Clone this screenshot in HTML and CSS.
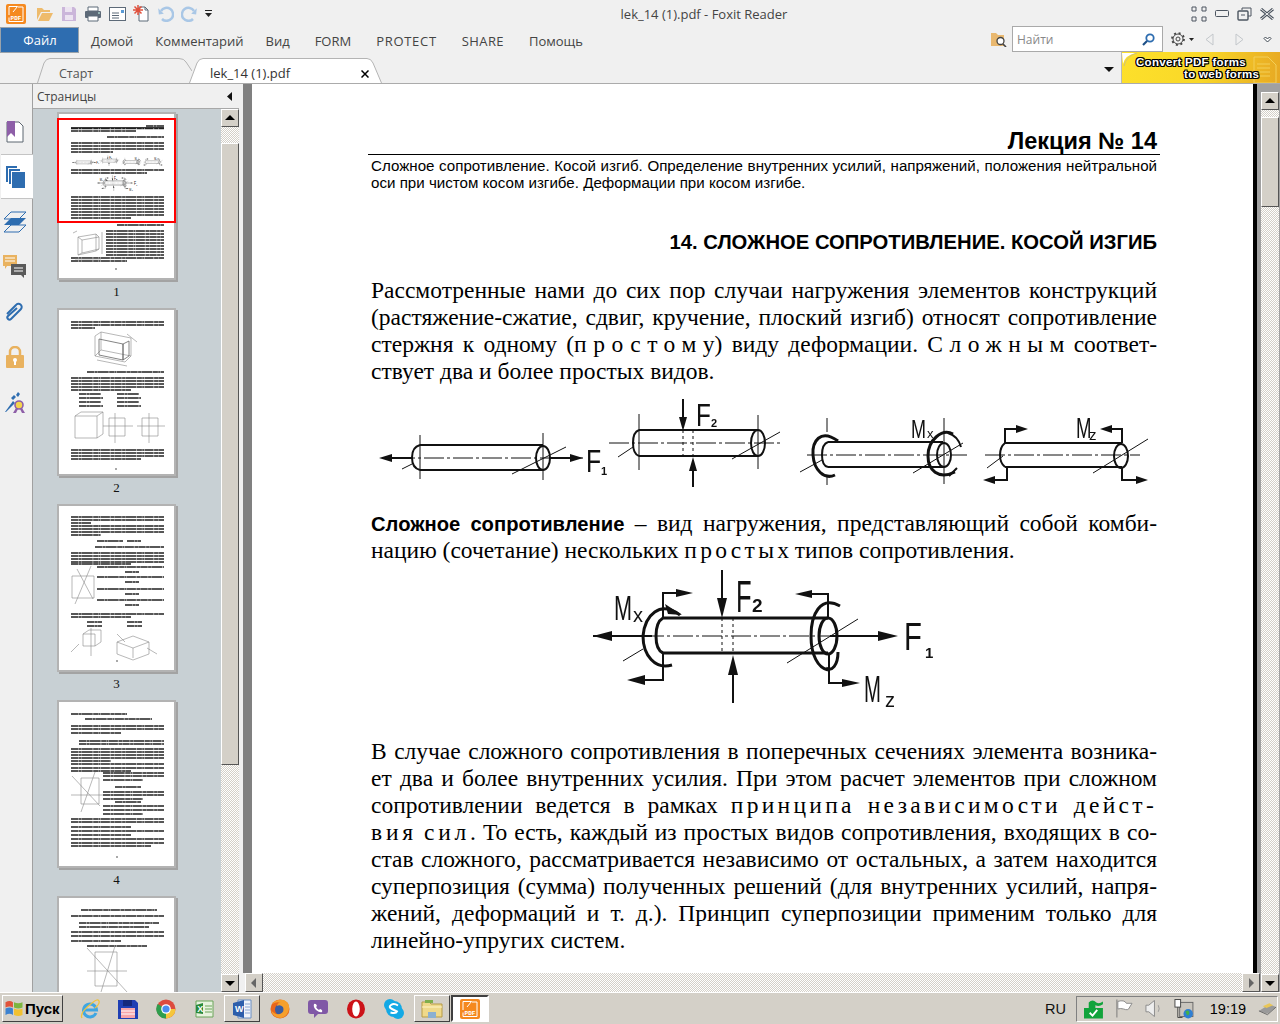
FILE: index.html
```html
<!DOCTYPE html>
<html lang="ru">
<head>
<meta charset="utf-8">
<title>lek_14 (1).pdf - Foxit Reader</title>
<link rel="stylesheet" href="styles.css">
</head>
<body>
<div class="app">
  <header class="titlebar">
    <div class="quick">
      <svg class="ico-logo" width="20" height="20" viewBox="0 0 20 20"><rect width="20" height="20" rx="2" fill="#f5891f"/><path d="M3 11V2.500h8.500L7 8M12 3h5v14.500H3v-4" fill="none" stroke="#fff"/><text x="10" y="16" text-anchor="middle" class="pdf-mini">PDF</text></svg>
      <svg class="qi" width="18" height="16" viewBox="0 0 18 16"><path d="M1 14V2h5l2 2h6v2H5L1 14zm1 1 4-8h11l-4 8z" fill="#eebb6c"/></svg>
      <svg class="qi" width="16" height="16" viewBox="0 0 16 16"><path d="M1 1h12l2 2v12H1z" fill="#cbb6da"/><path d="M4 1h7v5H4zM4 9h8v5H4z" fill="#ece4f1"/></svg>
      <svg class="qi" width="18" height="16" viewBox="0 0 18 16"><path d="M4 1h10v4H4z" fill="#fff" stroke="#5d6a78"/><rect x="1" y="5" width="16" height="7" rx="1" fill="#5d6a78"/><path d="M4 10h10v5H4z" fill="#fff" stroke="#5d6a78"/><path d="M14 7h2" stroke="#cfe"/></svg>
      <svg class="qi" width="17" height="14" viewBox="0 0 17 14"><rect x=".5" y=".5" width="16" height="13" fill="#fff" stroke="#5d6a78"/><path d="M3 6h7M3 8.500h7M3 11h7" stroke="#5d6a78"/><rect x="12" y="3" width="3" height="3" fill="#5a9bd6"/></svg>
      <svg class="qi" width="17" height="17" viewBox="0 0 17 17"><path d="M6 2h6l3 3v11H6z" fill="#fff" stroke="#5d6a78"/><path d="M12 2v3h3" fill="none" stroke="#5d6a78"/><path d="M5 0v10M0 5h10M1.500 1.500l7 7M8.500 1.500l-7 7" stroke="#e0503c" stroke-width="1.500"/></svg>
      <svg class="qi" width="17" height="16" viewBox="0 0 17 16"><path d="M4 5a6.500 6.500 0 1 1 1 8" fill="none" stroke="#a9c7e6" stroke-width="2.500"/><path d="M0 5h8l-3 4z" fill="#a9c7e6" transform="rotate(45 4 5)"/></svg>
      <svg class="qi" width="17" height="16" viewBox="0 0 17 16"><path d="M13 5a6.500 6.500 0 1 0-1 8" fill="none" stroke="#a9c7e6" stroke-width="2.500"/><path d="M17 5H9l3 4z" fill="#a9c7e6" transform="rotate(-45 13 5)"/></svg>
      <svg class="qi-more" width="7" height="7" viewBox="0 0 7 7"><path d="M0 0h7v1H0zM0 3h7L3.500 7z" fill="#222"/></svg>
    </div>
    <div class="wintitle">lek_14 (1).pdf - Foxit Reader</div>
    <div class="winctl">
      <svg width="16" height="16" viewBox="0 0 16 16"><path d="M1 5V1h4v4zM11 5V1h4v4zM1 15v-4h4v4zM11 15v-4h4v4z" fill="none" stroke="#4c5560"/></svg>
      <svg width="14" height="7" viewBox="0 0 14 7"><rect x=".5" y=".5" width="13" height="6" rx="1" fill="none" stroke="#4c5560"/></svg>
      <svg width="15" height="14" viewBox="0 0 15 14"><path d="M5 3V1h9v8h-3" fill="none" stroke="#4c5560"/><rect x="1" y="4" width="10" height="9" rx="1" fill="none" stroke="#4c5560" stroke-width="1.400"/><path d="M4 8h4" stroke="#4c5560"/></svg>
      <svg width="14" height="12" viewBox="0 0 14 12"><path d="M1 1l12 10M13 1L1 11" stroke="#4c5560" stroke-width="3"/><path d="M1 1l12 10M13 1L1 11" stroke="#f0f0f0"/></svg>
    </div>
  </header>

  <nav class="menubar">
    <div class="file-btn">Файл</div>
    <ul class="menu">
      <li>Домой</li><li>Комментарий</li><li>Вид</li><li class="lat">FORM</li><li class="lat wide1">PROTECT</li><li class="lat wide2">SHARE</li><li class="lat">Помощь</li>
    </ul>
    <div class="menu-right">
      <svg width="16" height="15" viewBox="0 0 16 15"><path d="M0 1h5l2 2h6v11H0z" fill="#e9b86f"/><circle cx="9.500" cy="9" r="3.500" fill="#fff" stroke="#444" stroke-width="1.300"/><path d="M12 12l3 3" stroke="#444" stroke-width="1.600"/></svg>
      <div class="search"><span>Найти</span>
        <svg width="13" height="13" viewBox="0 0 13 13"><circle cx="8" cy="5" r="3.700" fill="#fff" stroke="#2e6db0" stroke-width="1.800"/><path d="M5 8l-4 4" stroke="#1d4f86" stroke-width="2.200"/></svg>
      </div>
      <svg class="gear" width="14" height="14" viewBox="0 0 14 14"><circle cx="7" cy="7" r="2" fill="none" stroke="#444"/><circle cx="7" cy="7" r="5" fill="none" stroke="#444"/><circle cx="7" cy="7" r="6" fill="none" stroke="#444" stroke-width="1.800" stroke-dasharray="2 2.700"/></svg>
      <svg class="gear-caret" width="5" height="3" viewBox="0 0 5 3"><path d="M0 0h5L2.500 3z" fill="#222"/></svg>
      <svg class="nav-b" width="9" height="13" viewBox="0 0 9 13"><path d="M8 1v11L1 6.500z" fill="none" stroke="#c3c7cb"/></svg>
      <svg class="nav-f" width="9" height="13" viewBox="0 0 9 13"><path d="M1 1v11l7-5.500z" fill="none" stroke="#c3c7cb"/></svg>
      <svg class="nav-c" width="9" height="7" viewBox="0 0 9 7"><path d="M1 2.500 2.500 1 4.500 3 6.500 1 8 2.500 4.500 6z" fill="#fff" stroke="#3d4650"/></svg>
    </div>
  </nav>

  <div class="tabbar">
    <div class="tab tab-start">
      <svg class="tab-shape" width="155" height="25" viewBox="0 0 155 25"><path d="M.5 25 7 5Q9 .5 13 .5H142Q147 .5 149 4L155 13" fill="#f0f0f0" stroke="#b4b4b4"/></svg>
      <span>Старт</span>
    </div>
    <div class="tab tab-active">
      <svg class="tab-shape" width="193" height="25" viewBox="0 0 193 25"><path d="M.5 25 8 5Q10 .5 14 .5H178Q182 .5 184 5L192.500 25" fill="#fff" stroke="#b4b4b4"/></svg>
      <span>lek_14 (1).pdf</span>
      <svg class="tab-x" width="8" height="8" viewBox="0 0 8 8"><path d="M.5.5l7 7M7.500.5l-7 7" stroke="#000" stroke-width="1.500"/></svg>
    </div>
    <svg class="tab-more" width="10" height="5" viewBox="0 0 10 5"><path d="M0 0h10L5 5z" fill="#111"/></svg>
    <div class="banner">
      <svg class="banner-art" width="159" height="31" viewBox="0 0 159 31"><path d="M1 12Q3 3 14 1H0z" fill="#fff"/><path d="M2 14Q4 4 15 1" fill="none" stroke="#cfc27a"/><path d="M132 5h14l8 8v18h-22zM135 12h13M135 16h13M135 20h13M135 24h13" fill="none" stroke="#f3cf58"/></svg>
      <span class="b1">Convert PDF forms</span>
      <span class="b2">to web forms</span>
    </div>
  </div>

  <main class="main">
    <aside class="rail">
      <div class="rail-item">
        <svg width="18" height="22" viewBox="0 0 18 22"><path d="M1 1h12l4 4v16H1z" fill="#fff" stroke="#5d6670"/><path d="M1 0h8v16l-4-4-4 4z" fill="#8e5fa8"/></svg>
      </div>
      <div class="rail-item on">
        <svg width="19" height="22" viewBox="0 0 19 22"><path d="M0 16V0h11v2H2v14z" fill="#2e6db0"/><path d="M3 18V3h11v2H5v13z" fill="#2e6db0"/><rect x="6" y="6" width="13" height="16" fill="#2e6db0"/></svg>
      </div>
      <div class="rail-item">
        <svg width="24" height="22" viewBox="0 0 24 22"><path d="M1 8 8 1h15l-7 7z" fill="none" stroke="#2e6db0"/><path d="M1 14 8 7h15l-7 7z" fill="#2e6db0"/><path d="M1 21l7-7h15l-7 7z" fill="none" stroke="#2e6db0"/></svg>
      </div>
      <div class="rail-item">
        <svg width="23" height="23" viewBox="0 0 23 23"><path d="M0 0h14v11H4l-2 3v-3H0z" fill="#e9b25f"/><path d="M2 3h10M2 6h10" stroke="#fff"/><path d="M8 9h15v11h-2v3l-3-3H8z" fill="#5a5a5a"/><path d="M11 13h9M11 16h9" stroke="#fff"/></svg>
      </div>
      <div class="rail-item">
        <svg width="20" height="22" viewBox="0 0 20 22"><path d="M4 12 13 3a3 3 0 0 1 5 4L8 17a2 2 0 0 1-3-3l9-8" fill="none" stroke="#2e6db0" stroke-width="2" transform="translate(-2 1)"/></svg>
      </div>
      <div class="rail-item">
        <svg width="18" height="22" viewBox="0 0 18 22"><path d="M4 10V6a5 5 0 0 1 10 0v4" fill="none" stroke="#e9b25f" stroke-width="2.500"/><rect y="9" width="18" height="13" rx="1" fill="#e9b25f"/><circle cx="9" cy="14" r="2" fill="#fff"/><rect x="8" y="14" width="2" height="5" fill="#fff"/></svg>
      </div>
      <div class="rail-item">
        <svg width="21" height="24" viewBox="0 0 21 24"><path d="M1 22 9 11l2 2-9 9z" fill="#2e6db0"/><path d="M7 8l3-3 2 2-3 3zM12 5l2-3 2 2-2 3z" fill="#2e6db0"/><circle cx="15" cy="15" r="4" fill="#f4d44d" stroke="#8e5fa8" stroke-width="1.600"/><path d="M12 18l-3 5h3l2-4zM18 18l3 5h-3l-2-4z" fill="#8e5fa8"/></svg>
      </div>
    </aside>

    <section class="side">
      <div class="side-head"><span>Страницы</span>
        <svg width="5" height="9" viewBox="0 0 5 9"><path d="M5 0v9L0 4.500z" fill="#111"/></svg>
      </div>
      <div class="side-body">
        <div class="thumbs">
          <figure class="thumb-item">
            <div class="thumb">
              <svg viewBox="2 2 115 164" width="115" height="164">
                <path class="tx" d="M89 14h18M14 16.500h93M14 19h65M50 25h57M14 31h93M14 34h93M14 37h93M14 40h42M14 58h93M14 61h76M14 85h93M14 88h93M14 91h93M14 94h93M14 97h93M14 100h93M14 103h93M14 106h60M60 113h47M49 119h58M49 122h58M49 125h58M49 128h58M49 131h58M49 134h58M49 137h58M49 140h58M49 143h58M14 146h93M14 149h56"/>
                <path class="thin" d="M14 15.500h93"/>
                <use href="#art1" transform="translate(14 43) scale(.118) translate(-371 -395)"/>
                <use href="#art2" transform="translate(14 63) scale(.118) translate(-371 -568)"/>
                <path class="gr" d="M21 125l18-3v17l-18 4zM25 128l17-3v12l-17 4zM21 125l4 3M39 122l3 3M39 139l3-2M21 143l4-2M16 121l4-2M45 120v22M18 147h26"/>
                <circle cx="59" cy="157" r=".7" fill="#111"/>
              </svg>
              <span class="viewbox"></span>
            </div>
            <figcaption>1</figcaption>
          </figure>
          <figure class="thumb-item">
            <div class="thumb">
              <svg viewBox="2 2 115 164" width="115" height="164">
                <path class="tx" d="M14 14h93M14 17h93M14 20h24M30 64h77M14 70h93M14 73h93M14 76h93M14 79h93M14 82h60M22 86h22M60 86h22M22 90h24M60 90h24M22 94h22M60 94h22M22 98h24M60 98h24M14 142h93M14 145h93M14 148h93M14 151h70"/>
                <path class="gr" d="M44 24l30 6v18l-30-6zM44 24l-6 4v20l6-6M38 48l30 6 6-6M70 26l10 8M40 52l30 6"/>
                <path class="dk" d="M42 31l24 5v16l-24-5zM66 36l6-3v15l-6 4z"/>
                <path class="gr" d="M18 108h22v22H18zM24 104h22v22M18 108l6-4M40 108l6-4M40 130l6-4M52 110h16v18H52zM58 105v30M46 118h30M85 110h16v18H85zM92 105v30M80 118h28"/>
                <circle cx="59" cy="161" r=".7" fill="#111"/>
              </svg>
            </div>
            <figcaption>2</figcaption>
          </figure>
          <figure class="thumb-item">
            <div class="thumb">
              <svg viewBox="2 2 115 164" width="115" height="164">
                <path class="tx" d="M14 13h93M14 16h93M14 19h20M14 22h93M14 25h93M14 28h93M14 31h30M40 37h26M70 37h14M38 43h69M14 49h93M14 52h93M14 55h93M14 58h93M14 60h60M40 63h67M68 68h14M40 73h67M68 78h14M40 85h67M68 90h14M40 96h67M68 101h14M14 110h93M14 113h60M30 118h15M70 118h15M30 122h15M70 122h15"/>
                <path class="gr" d="M15 72h22v22H15zM18 100 34 62M20 65l16 30M26 130h12v12H26zM26 130l6-4h12v12l-6 4M34 124v28M22 140l-8 8M60 138l16-6 16 6-16 6zM76 144v10M92 138v12M60 138v12l16 6 16-6M60 130l8 8M100 150l-10-6"/>
                <circle cx="60" cy="157" r=".7" fill="#111"/>
              </svg>
            </div>
            <figcaption>3</figcaption>
          </figure>
          <figure class="thumb-item">
            <div class="thumb">
              <svg viewBox="2 2 115 164" width="115" height="164">
                <path class="tx" d="M14 14h56M28 19h67M14 26h93M14 29h93M14 33h50M22 41h85M22 44h85M14 49h93M14 52h93M14 55h93M14 58h93M14 61h40M14 64h93M14 68h93M14 71h60M46 73h61M46 76h61M46 80h40M58 87h26M46 92h61M46 95h61M46 99h40M58 102h26M46 106h61M46 110h61M46 114h40M14 119h93M14 122h93M14 127h60M14 131h93M14 135h60M14 139h93M14 143h93M14 146h80"/>
                <path class="gr" d="M24 78h18v26H24zM15 76l28 30M38 72l-14 40M14 95h32"/>
                <circle cx="60" cy="157" r=".7" fill="#111"/>
              </svg>
            </div>
            <figcaption>4</figcaption>
          </figure>
          <figure class="thumb-item">
            <div class="thumb">
              <svg viewBox="2 2 115 164" width="115" height="164">
                <path class="tx" d="M24 14h76M14 20h93M22 27h80M22 31h70M14 36h93M14 40h93M14 45h50M30 50h60"/>
                <path class="gr" d="M38 56h22v34H38zM30 52l40 44M58 50 44 96M30 75h40"/>
              </svg>
            </div>
          </figure>
        </div>
        <div class="sb">
          <div class="sb-btn up"></div>
          <div class="sb-track s16"></div>
          <div class="sb-thumb side-thumb"></div>
          <div class="sb-track fill"></div>
          <div class="sb-btn down"></div>
        </div>
      </div>
    </section>

    <section class="viewer">
      <div class="viewer-col">
        <div class="viewer-upper">
          <div class="splitter"></div>
          <article class="doc">
            <h1 class="lecture">Лекция № 14</h1>
            <p class="sub">Сложное сопротивление. Косой изгиб. Определение внутренних усилий, напряжений, положения нейтральной оси при чистом косом изгибе. Деформации при косом изгибе.</p>
            <h2 class="chapter">14. СЛОЖНОЕ СОПРОТИВЛЕНИЕ. КОСОЙ ИЗГИБ</h2>
            <div class="para p1">
              <span class="ln">Рассмотренные нами до сих пор случаи нагружения элементов конструкций</span>
              <span class="ln">(растяжение-сжатие, сдвиг, кручение, плоский изгиб) относят сопротивление</span>
              <span class="ln">стержня к одному (<span class="sp7">простом</span>у) виду деформации. <span class="sp7">Сложны</span>м соответ-</span>
              <span class="ln end">ствует два и более простых видов.</span>
            </div>
            <svg class="fig fig1" width="786" height="95" viewBox="371 395 786 95">
              <g id="art1">
                <g class="ink">
                  <path d="M420 445H543M420 470H543M420 445Q412 447 412 457.500T420 470"/>
                  <ellipse cx="543" cy="458" rx="7" ry="12"/>
                  <path class="ax" d="M395 458H583"/>
                  <path class="w1" d="M420 435V479M543 433V480M402 469 412 464M512 474 566 447"/>
                  <path class="w2" d="M390 458H412M550 458H575"/>
                  <path class="fl" d="M379 458 392 454V462zM583 458 570 454V462z"/>
                </g>
                <text class="lbl" transform="translate(586 472) scale(.8 1)" font-size="31">F</text>
                <text class="lbl subs" x="601" y="475" font-size="11">1</text>
                <g class="ink">
                  <path d="M639 430H758M639 456H758M639 430Q633 432 633 443T639 456"/>
                  <ellipse cx="758" cy="443" rx="7" ry="13"/>
                  <path class="ax" d="M609 443H783"/>
                  <path class="w1" d="M639 414V470M758 415V469M618 457 633 447M732 459 780 432"/>
                  <path class="dash" d="M683 430V456M693 430V456"/>
                  <path class="w2" d="M683 399V425M693 465V487"/>
                  <path class="fl" d="M683 431 679 417H687zM693 457 689 471H697z"/>
                </g>
                <text class="lbl" transform="translate(696 426) scale(.76 1)" font-size="32">F</text>
                <text class="lbl subs" x="711" y="427" font-size="11">2</text>
                <g class="ink">
                  <path d="M828 442H943M828 467H943M828 442Q822 444 822 455T828 467"/>
                  <ellipse cx="944" cy="455" rx="7" ry="12"/>
                  <path class="ax" d="M807 455H967"/>
                  <path class="w1" d="M827 418V432M827 475V485M944 418V484M800 472 822 460M913 473 963 443"/>
                  <path class="w3" d="M838 441C820 428 812 442 813 455 814 470 824 480 835 475M953 434C942 428 928 440 928 456 928 470 938 480 955 472"/>
                  <path class="w2" d="M948 433Q958 436 961 447M949 476 957 468"/>
                </g>
                <text class="lbl" transform="translate(911 438) scale(.72 1)" font-size="25">M</text>
                <text class="lbl" x="927" y="438" font-size="13">x</text>
                <g class="ink">
                  <path d="M1005 443H1122M1005 467H1122M1005 443Q1000 447 1000 455T1005 467"/>
                  <ellipse cx="1121" cy="456" rx="7" ry="12"/>
                  <path class="ax" d="M985 455H1140"/>
                  <path class="w1" d="M987 468 1003 456M1093 473 1148 439"/>
                  <path class="w2" d="M1005 443V429H1022M1122 443V429H1106M1007 467V480H990M1122 467V480H1142"/>
                  <path class="fl" d="M1028 429 1016 425V433zM1100 429 1112 425V433zM983 480 995 476V484zM1148 480 1136 476V484z"/>
                </g>
                <text class="lbl" transform="translate(1076 438) scale(.62 1)" font-size="30">M</text>
                <text class="lbl" x="1089" y="440" font-size="15">z</text>
              </g>
            </svg>
            <div class="para p2">
              <span class="ln"><b class="bd">Сложное сопротивление</b> – вид нагружения, представляющий собой комби-</span>
              <span class="ln end">нацию (сочетание) нескольких <span class="sp3">просты</span>х типов сопротивления.</span>
            </div>
            <svg class="fig fig2" width="786" height="148" viewBox="371 568 786 148">
              <g id="art2">
                <g class="ink">
                  <path class="w3" d="M663 618H828M663 653H828M663 618Q656 622 656 636T663 653"/>
                  <ellipse class="w3" cx="828" cy="636" rx="9" ry="18"/>
                  <path class="ax" d="M615 636H875"/>
                  <path class="w2" d="M593 636H652M830 636H880"/>
                  <path class="fl" d="M593 636 612 631V641zM898 636 878 631V641zM722 618 717 598H727zM733 655 728 675H738zM693 593 676 589V597zM795 594 812 590V598zM627 680 645 675V685zM860 683 842 679V687z"/>
                  <path class="w2" d="M722 570V600M733 672V703M663 618V593H680M828 618V594H810M663 653V680H640M829 654V683H848"/>
                  <path class="dash" d="M722 618V653M733 618V653"/>
                  <path class="w1" d="M623 661 643 649M787 663 858 619"/>
                  <path class="w3" d="M680 615C660 600 645 615 643 636 643 655 655 670 672 665M840 606C820 595 811 615 811 636 811 655 818 668 828 670M838 652C838 665 832 672 826 668"/>
                  <path class="fl" d="M665 604 682 615 668 614z"/>
                </g>
                <text class="lbl" transform="translate(614 620) scale(.62 1)" font-size="35">M</text>
                <text class="lbl" x="633" y="622" font-size="20">x</text>
                <text class="lbl" transform="translate(736 612) scale(.58 1)" font-size="44">F</text>
                <text class="lbl subs" x="752" y="612" font-size="19">2</text>
                <text class="lbl" transform="translate(904 650) scale(.75 1)" font-size="39">F</text>
                <text class="lbl subs" x="925" y="658" font-size="15">1</text>
                <text class="lbl" transform="translate(864 702) scale(.55 1)" font-size="37">M</text>
                <text class="lbl" x="885" y="707" font-size="20">z</text>
              </g>
            </svg>
            <div class="para p3">
              <span class="ln">В случае сложного сопротивления в поперечных сечениях элемента возника-</span>
              <span class="ln">ет два и более внутренних усилия. При этом расчет элементов при сложном</span>
              <span class="ln">сопротивлении ведется в рамках <span class="sp3">принципа</span> <span class="sp3">независимости</span> <span class="sp3">дейст-</span></span>
              <span class="ln"><span class="sp4">вия</span> <span class="sp4">сил</span>. То есть, каждый из простых видов сопротивления, входящих в со-</span>
              <span class="ln">став сложного, рассматривается независимо от остальных, а затем находится</span>
              <span class="ln">суперпозиция (сумма) полученных решений (для внутренних усилий, напря-</span>
              <span class="ln">жений, деформаций и т. д.). Принцип суперпозиции применим только для</span>
              <span class="ln end">линейно-упругих систем.</span>
            </div>
          </article>
          <div class="edge"></div>
        </div>
        <div class="hbar">
          <div class="sb-btn left"></div>
          <div class="sb-track fill"></div>
          <div class="sb-btn right"></div>
        </div>
      </div>
      <div class="vbar">
        <div class="sb-btn up"></div>
        <div class="sb-track s7"></div>
        <div class="sb-thumb doc-thumb"></div>
        <div class="sb-track fill"></div>
        <div class="sb-btn down"></div>
      </div>
    </section>
  </main>

  <footer class="taskbar">
    <div class="start">
      <svg width="20" height="17" viewBox="0 0 18 16"><path d="M1 2q4-2 7 0v5q-3-2-7 0z" fill="#e0533a"/><path d="M9 2q4 2 8 0v5q-4 2-8 0z" fill="#7cb53f"/><path d="M1 8q4-2 7 0v6q-3-2-7 0z" fill="#3c82d0"/><path d="M9 8q4 2 8 0v6q-4 2-8 0z" fill="#f1c131"/></svg>
      <span>Пуск</span>
    </div>
    <div class="task-icons">
      <div class="task"><svg width="20" height="20" viewBox="0 0 20 20"><path d="M16 14a6.500 6.500 0 1 1 .5-3H4" fill="none" stroke="#3ea6e3" stroke-width="3"/><path d="M2 19Q-1 14 12 4 18 -1 19 2T15 9" fill="none" stroke="#f0c33c" stroke-width="1.300"/></svg></div>
      <div class="task"><svg width="20" height="20" viewBox="0 0 20 20"><path d="M0 1h17l3 3v16H0z" fill="#1f3fb4"/><rect x="5" y="1" width="9" height="6" fill="#14287c"/><rect x="3" y="9" width="14" height="10" fill="#f8a5a9"/><path d="M3 12h14M3 15h14" stroke="#fff"/></svg></div>
      <div class="task"><svg width="20" height="20" viewBox="0 0 20 20"><circle cx="10" cy="10" r="9.500" fill="#dd4b3e"/><path d="M10 10 1.700 5A9.500 9.500 0 0 0 10 19.500z" fill="#2e9e4e"/><path d="M10 10h9.500A9.500 9.500 0 0 1 10 19.500z" fill="#f5c63b"/><circle cx="10" cy="10" r="4.800" fill="#fff"/><circle cx="10" cy="10" r="3.600" fill="#4b8df0"/></svg></div>
      <div class="task"><svg width="19" height="18" viewBox="0 0 19 18"><path d="M1 1h17v16H1z" fill="#e7f2de" stroke="#6aa55a"/><path d="M1 5 8 3v11l-7-1z" fill="#2a8a3a"/><path d="M10 6h7M10 9h7M10 12h7" stroke="#6aa55a"/><text x="2.200" y="11.500" class="xl">X</text></svg></div>
      <div class="task press"><svg width="19" height="20" viewBox="0 0 19 20"><path d="M5 1h13v18H5z" fill="#f0f4fa" stroke="#6b8fc4"/><path d="M0 4l11-3v18L0 16z" fill="#2d5eab"/><path d="M12 5h5M12 8h5M12 11h5M12 14h5" stroke="#8aa6d3"/><text x="2" y="13" class="xl">W</text></svg></div>
      <div class="task"><svg width="20" height="20" viewBox="0 0 20 20"><circle cx="10" cy="10" r="9.500" fill="#e8661c"/><circle cx="10.500" cy="10.500" r="5.500" fill="#3a5ca0"/><path d="M2 5Q6 0 14 1q6 3 5 9-1 7-8 9Q3 19 1 11q3 5 9 4 5-2 3-7-3-3-6-1 1-4 4-3-4-2-9 1z" fill="#f6a02c"/></svg></div>
      <div class="task"><svg width="20" height="20" viewBox="0 0 20 20"><path d="M3 1h14q3 0 3 3v8q0 3-3 3H10l-4 4v-4H3q-3 0-3-3V4q0-3 3-3z" fill="#8058a6"/><path d="M6 5q2-1 3 2L8 8q1 2 3 3l1-1q3 1 2 3-2 1-6-2-3-3-2-6z" fill="#fff"/></svg></div>
      <div class="task"><svg width="18" height="20" viewBox="0 0 18 20"><ellipse cx="9" cy="10" rx="9" ry="9.500" fill="#cc1218"/><ellipse cx="9" cy="10" rx="3.800" ry="7.500" fill="#fff"/></svg></div>
      <div class="task"><svg width="20" height="20" viewBox="0 0 20 20"><circle cx="6" cy="6" r="6" fill="#13a9e5"/><circle cx="14" cy="14" r="6" fill="#13a9e5"/><circle cx="10" cy="10" r="8" fill="#13a9e5"/><path d="M14 6.500Q10 4 7 6t1 4 5 2.500q-1 2.500-6.500 1" fill="none" stroke="#fff" stroke-width="2"/></svg></div>
      <div class="task press"><svg width="22" height="20" viewBox="0 0 22 20"><path d="M1 3h7l2 2h11v13H1z" fill="#efd98a" stroke="#b69b47"/><path d="M1 8h20" stroke="#fff5c8"/><rect x="4" y="1" width="8" height="3" fill="#7fae4c"/><rect x="7" y="13" width="8" height="6" fill="#8bb0d1"/></svg></div>
      <div class="task active"><svg width="20" height="20" viewBox="0 0 20 20"><rect width="20" height="20" rx="2" fill="#f5891f"/><path d="M3 11V2.500h8.500L7 8M12 3h5v14.500H3v-4" fill="none" stroke="#fff"/><text x="10" y="16" text-anchor="middle" class="pdf-mini">PDF</text></svg></div>
    </div>
    <div class="lang">RU</div>
    <div class="tray">
      <svg width="20" height="20" viewBox="0 0 20 20"><path d="M0 9h5V3q4-4 8 0 3 2 7-1v3q-4 3-8 1V9h8v11H0z" fill="#11a33b"/><path d="M6 14l3 3 5-6" fill="none" stroke="#fff" stroke-width="2"/></svg>
      <svg width="19" height="19" viewBox="0 0 19 19"><path d="M2 0v19" stroke="#777"/><path d="M3 2q7-2 9 2l6 0-3 5q-1 3-6 1-3-1-6 0z" fill="#fff" stroke="#888"/></svg>
      <svg width="18" height="17" viewBox="0 0 18 17"><path d="M1 5h3l6-5v17l-6-5H1z" fill="#eee" stroke="#888"/><path d="M14 5q2 4 0 7" fill="none" stroke="#999"/></svg>
      <svg width="21" height="20" viewBox="0 0 21 20"><rect x="6" y="3" width="14" height="15" fill="#c9c5bd" stroke="#666"/><rect x="1" y="0" width="6" height="8" fill="#fff" stroke="#444"/><path d="M4 8v11h5" fill="none" stroke="#444"/><circle cx="15" cy="15" r="5" fill="#2f7fd3"/><path d="M12 13q3-3 4 0t-2 4" fill="#43b04a"/></svg>
      <span class="clock">19:19</span>
      <svg class="desk" width="20" height="14" viewBox="0 0 20 14"><path d="M1 9 12 2l7 3-9 7z" fill="#9a9a9a"/><path d="M5 4l7-3 4 2-7 3z" fill="#e9c657"/><path d="M1 9l9 4 9-8" fill="none" stroke="#666"/></svg>
    </div>
  </footer>
</div>
</body>
</html>
```
FILE: styles.css
```css
* { box-sizing: border-box; }
html, body { margin: 0; padding: 0; }
body { width: 1280px; height: 1024px; overflow: hidden; background: #f0f0f0; font-family: "Open Sans", "Noto Sans", sans-serif; color: #444; }
.app { width: 1280px; height: 1024px; display: flex; flex-direction: column; overflow: hidden; }
.pdf-mini { font: bold 6px "Liberation Mono", monospace; fill: #fff; }
.xl { font: bold 9px "Liberation Sans", sans-serif; fill: #fff; }

.titlebar { height: 27px; display: flex; align-items: center; flex: none; }
.quick { width: 212px; flex: none; display: flex; align-items: center; padding-left: 6px; }
.quick .qi { margin-left: 7px; flex: none; }
.ico-logo { margin-right: 3px; flex: none; }
.qi-more { margin-left: 7px; }
.wintitle { flex: 1; text-align: center; font-size: 13px; color: #444; padding-left: 5px; }
.winctl { width: 89px; flex: none; display: flex; align-items: center; gap: 8px; }

.menubar { height: 25px; flex: none; display: flex; align-items: center; }
.file-btn { width: 79px; height: 26px; background: #2e6db0; border: 1px solid #9aa3ab; color: #fff; font-size: 13px; text-align: center; line-height: 24px; padding-left: 1px; }
.menu { list-style: none; display: flex; gap: 22px; margin: 0; padding: 2px 0 0 12px; font-size: 13px; color: #444; }
.menu .lat { margin-left: 3px; }
.menu .wide1 { letter-spacing: .7px; }
.menu .wide2 { letter-spacing: .4px; }
.menu-right { margin-left: auto; display: flex; align-items: center; height: 26px; align-self: flex-start; margin-top: -1px; }
.search { width: 151px; height: 26px; margin-left: 5px; background: #fff; border: 1px solid #a9a9a9; display: flex; align-items: center; justify-content: space-between; padding: 0 7px 0 4px; font-size: 12px; color: #888; }
.gear { margin-left: 8px; }
.gear-caret { margin-left: 4px; }
.nav-b { margin-left: 11px; }
.nav-f { margin-left: 21px; }
.nav-c { margin-left: 19px; margin-right: 8px; }

.tabbar { height: 32px; flex: none; display: flex; align-items: flex-end; border-bottom: 1px solid #ababab; padding-left: 37px; }
.tab { position: relative; height: 25px; font-size: 13px; line-height: 31px; }
.tab-shape { position: absolute; left: 0; top: 0; }
.tab span { position: relative; }
.tab-start { width: 152px; padding-left: 22px; color: #555; font-size: 12.500px; }
.tab-active { width: 193px; padding-left: 21px; color: #333; }
.tab-x { position: absolute; right: 13px; top: 12px; }
.tab-more { margin-left: 722px; margin-bottom: 11px; }
.banner { margin-left: auto; width: 159px; height: 31px; position: relative; background: linear-gradient(100deg, #fde02b 0%, #f9d828 50%, #e7a823 100%); border-left: 1px solid #b9b9b9; font: bold 11.500px/12px "Liberation Sans", sans-serif; letter-spacing: .3px; color: #fff; text-shadow: 1px 0 0 #000, -1px 0 0 #000, 0 1px 0 #000, 0 -1px 0 #000, 1px 1px 0 #000, -1px -1px 0 #000, 1px -1px 0 #000, -1px 1px 0 #000; }
.banner-art { position: absolute; left: 0; top: 0; }
.banner span { position: absolute; white-space: nowrap; }
.b1 { left: 14px; top: 4px; }
.b2 { left: 62px; top: 16px; }

.main { height: 908px; flex: none; display: flex; }
.rail { width: 33px; flex: none; border-right: 1px solid #a0a0a0; padding-top: 25px; background: #f0f0f0; }
.rail-item { height: 45px; display: flex; align-items: center; justify-content: center; padding-right: 3px; }
.rail-item.on { background: #fff; margin: 0 -1px 0 1px; border-top: 1px solid #c4c4c4; border-bottom: 1px solid #c4c4c4; position: relative; padding-right: 4px; }
.side { width: 206px; flex: none; display: flex; flex-direction: column; }
.side-head { height: 25px; flex: none; border-bottom: 1px solid #a8a8a8; display: flex; align-items: center; justify-content: space-between; padding: 0 7px 0 4px; font-size: 12px; color: #444; }
.side-body { flex: 1; min-height: 0; display: flex; }
.thumbs { flex: 1; background: #c8d0d4; padding: 3px 0 0 24px; overflow: hidden; }
.thumb-item { margin: 0; height: 196px; width: 119px; }
.thumb { position: relative; width: 119px; height: 168px; background: #fff; border: 2px solid #b3b3b3; box-shadow: 2px 2px 0 #a3a3a3; }
.thumb svg { display: block; }
.viewbox { position: absolute; left: -2px; top: 4px; width: 119px; height: 105px; border: 2px solid #f00; }
.thumb-item figcaption { text-align: center; font: 13px/22px "Liberation Serif", serif; color: #111; margin-top: 1px; }
.tx { fill: none; stroke: #000; stroke-width: 1.700; stroke-dasharray: 7 .4 3 .3 11 .5 5 .3 2 .4 9 .5 4 .3; stroke-opacity: .88; filter: blur(.25px); }
.thin { fill: none; stroke: #111; stroke-width: .8; }
.gr { fill: none; stroke: #888; stroke-width: .6; }
.dk { fill: none; stroke: #666; stroke-width: .8; }

.sb { width: 18px; flex: none; display: flex; flex-direction: column; }
.sb-btn { width: 18px; height: 18px; flex: none; background: #d4d0c8; border: 1px solid; border-color: #fff #555 #555 #fff; position: relative; }
.sb-btn::after { content: ""; position: absolute; left: 50%; top: 50%; border: 5px solid transparent; }
.sb-btn.up::after { border-top: 0; border-bottom: 5px solid #000; transform: translate(-5px, -3px); }
.sb-btn.down::after { border-bottom: 0; border-top: 5px solid #000; transform: translate(-5px, -2px); }
.sb-btn.left::after { border-left: 0; border-right: 5px solid #666; transform: translate(-3px, -5px); }
.sb-btn.right::after { border-right: 0; border-left: 5px solid #666; transform: translate(-2px, -5px); }
.sb-track { background: repeating-conic-gradient(#d4d0c8 0 25%, #fff 0 50%) 0 0 / 2px 2px; }
.sb-track.fill { flex: 1; }
.s16 { height: 16px; flex: none; }
.s7 { height: 7px; flex: none; }
.sb-thumb { flex: none; background: #d4d0c8; border: 1px solid; border-color: #fff #555 #555 #fff; width: 18px; }
.side-thumb { height: 622px; }
.doc-thumb { height: 90px; }

.viewer { flex: 1; min-width: 0; display: flex; }
.viewer-col { width: 1021px; flex: none; display: flex; flex-direction: column; }
.viewer-upper { height: 889px; flex: none; display: flex; }
.splitter { width: 13px; flex: none; border-left: 4px solid #f0f0f0; background: #808080; }
.edge { width: 7px; flex: none; border-left: 4px solid #000; background: #a0a0a0; }
.doc { flex: 1; min-width: 0; background: #fff; padding: 44px 96px 0 119px; overflow: hidden; color: #000; }
.lecture { margin: 0 -3px; padding: 0 3px; border-bottom: 1px solid #000; height: 27px; text-align: right; font: bold 23.500px/26px "Liberation Sans", sans-serif; }
.sub { margin: 2px 0 0; font: 15.130px/17px "Liberation Sans", sans-serif; text-align: justify; }
.chapter { margin: 39px 0 0; text-align: right; font: bold 20.250px/24px "Liberation Sans", sans-serif; }
.para { font: 23.500px/27px "Liberation Serif", serif; }
.ln { display: block; text-align: justify; text-align-last: justify; white-space: nowrap; }
.ln.end { text-align-last: left; }
.sp7 { letter-spacing: 6.500px; }
.sp3 { letter-spacing: 3.300px; }
.sp4 { letter-spacing: 3.800px; }
.bd { font: bold 20.200px "Liberation Sans", sans-serif; }
.p1 { margin-top: 23px; }
.fig { display: block; filter: blur(.4px); }
.fig1 { margin-top: 10px; }
.p2 { margin-top: 20px; }
.fig2 { margin-top: 4px; }
.p3 { margin-top: 22px; }
.ink path, .ink ellipse { fill: none; stroke: #111; stroke-width: 2; }
.ink .ax { stroke-width: 1; stroke-dasharray: 20 3 3 3; }
.ink .w1 { stroke-width: 1; }
.ink .w2 { stroke-width: 2; }
.ink .w3 { stroke-width: 3; }
.ink .dash { stroke-width: 1; stroke-dasharray: 3 3; }
.ink .fl { fill: #111; stroke: none; }
.lbl { font-family: "Liberation Sans", sans-serif; fill: #111; }
.subs { font-weight: bold; }

.hbar { height: 19px; flex: none; display: flex; padding-left: 6px; }
.hbar .sb-btn { height: 19px; }
.vbar { width: 20px; flex: none; display: flex; flex-direction: column; padding: 8px 1px 0; background: #a0a0a0; }

.taskbar { height: 32px; flex: none; background: #d4d0c8; border-top: 1px solid #fff; display: flex; align-items: center; color: #000; }
.start { width: 61px; height: 27px; margin-left: 2px; background: #d4d0c8; border: 1px solid; border-color: #fff #404040 #404040 #fff; display: flex; align-items: center; gap: 1px; padding-left: 1px; font: bold 15px "Liberation Sans", sans-serif; color: #000; flex: none; }
.task-icons { display: flex; margin-left: 8px; }
.task { width: 38px; height: 27px; display: flex; align-items: center; justify-content: center; flex: none; }
.task.press { border: 1px solid; border-color: #fff #404040 #404040 #fff; margin: 0 1px; width: 36px; }
.task.active { border: 2px solid; border-color: #404040 #fff #fff #404040; background: #fff; }
.lang { margin-left: auto; font: 14.500px "Liberation Sans", sans-serif; color: #111; margin-right: 10px; }
.tray { width: 202px; height: 26px; margin-right: 2px; border: 1px solid; border-color: #808080 #fff #fff #808080; display: flex; align-items: center; gap: 12px; padding-left: 7px; flex: none; }
.clock { font: 14.500px "Liberation Sans", sans-serif; color: #000; margin-left: 4px; }
```
